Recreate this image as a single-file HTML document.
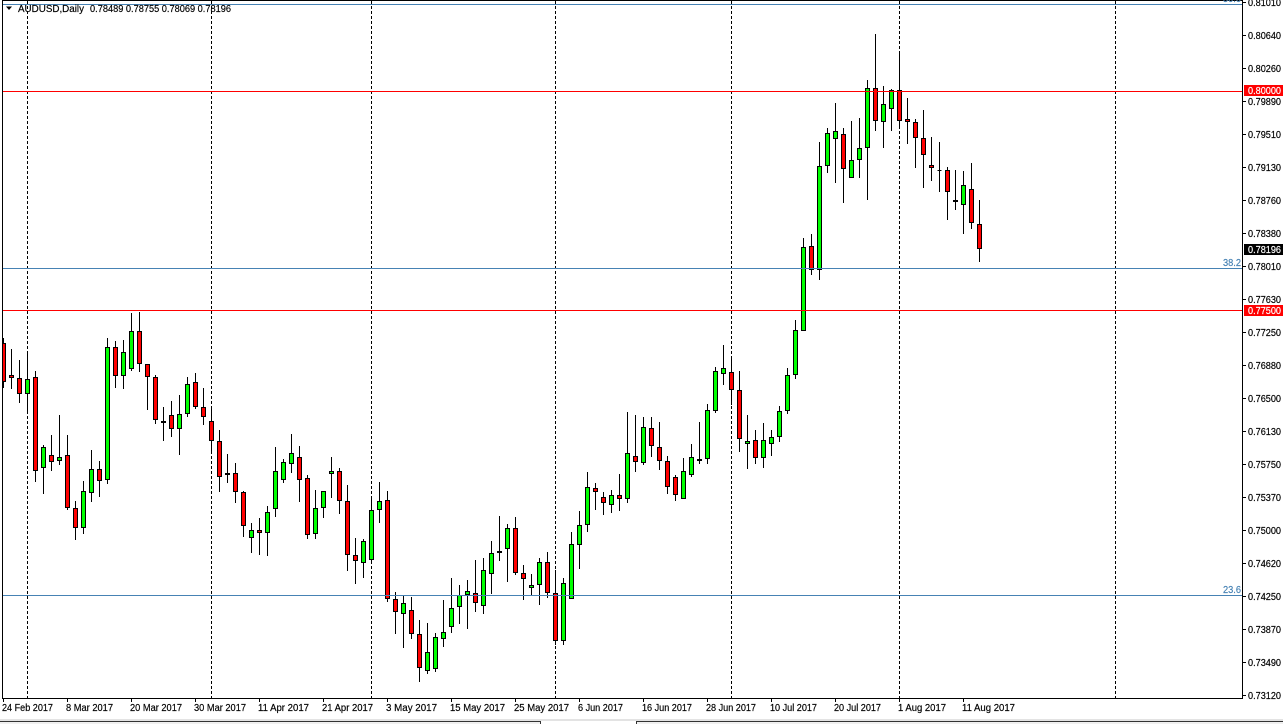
<!DOCTYPE html>
<html><head><meta charset="utf-8"><title>AUDUSD,Daily</title>
<style>
html,body{margin:0;padding:0;background:#fff;width:1283px;height:724px;overflow:hidden}
svg{display:block}
text{font-family:"Liberation Sans",sans-serif;font-size:10px;fill:#000;stroke:#000;stroke-width:.18px}
.c{stroke:#000;stroke-width:1;shape-rendering:crispEdges}
.l{shape-rendering:crispEdges;fill:none}
.f{fill:#4682b4;stroke:#4682b4}
.w{fill:#fff;stroke:#fff}
</style></head><body>
<svg width="1283" height="724" viewBox="0 0 1283 724" xmlns="http://www.w3.org/2000/svg">
<rect width="1283" height="724" fill="#fff"/>
<path class="l" stroke="#000" stroke-dasharray="3 2" d="M27.5 1V698M211.5 1V698M371.5 1V698M555.5 1V698M731.5 1V698M899.5 1V698M1115.5 1V698"/>
<path class="c" fill="none" d="M3.5 338V388M11.5 349V389M19.5 360V403M27.5 354V412M35.5 371V482M43.5 445V494M51.5 435V471M59.5 415V465M67.5 435V510M75.5 501V540M83.5 481V534M91.5 450V502M99.5 461V497M107.5 338V484M115.5 341V388M123.5 340V389M131.5 313V371M139.5 312V372M147.5 364V410M155.5 375V424M163.5 407V441M171.5 401V437M179.5 395V455M187.5 377V417M195.5 373V409M203.5 388V425M211.5 408V453M219.5 430V492M227.5 454V483M235.5 463V503M243.5 491V537M251.5 523V553M259.5 518V555M267.5 506V556M275.5 447V517M283.5 459V483M291.5 434V473M299.5 446V502M307.5 475V539M315.5 490V539M323.5 491V518M331.5 457V498M339.5 468V514M347.5 485V571M355.5 538V584M363.5 539V578M371.5 496V562M379.5 482V523M387.5 491V602M395.5 592V634M403.5 595V648M411.5 597V639M419.5 620V682M427.5 623V674M435.5 633V672M443.5 600V647M451.5 578V633M459.5 585V624M467.5 580V629M475.5 560V612M483.5 558V614M491.5 541V594M499.5 516V561M507.5 524V582M515.5 517V575M523.5 565V600M531.5 574V595M539.5 558V605M547.5 552V598M555.5 570V645M563.5 578V645M571.5 532V599M579.5 511V569M587.5 472V532M595.5 483V510M603.5 492V515M611.5 490V513M619.5 474V511M627.5 412V503M635.5 415V472M643.5 417V465M651.5 417V457M659.5 422V470M667.5 456V494M675.5 475V501M683.5 458V499M691.5 444V477M699.5 422V464M707.5 404V464M715.5 367V413M723.5 345V385M731.5 359V405M739.5 371V452M747.5 415V469M755.5 430V464M763.5 423V468M771.5 430V456M779.5 406V442M787.5 368V414M795.5 320V379M803.5 238V331M811.5 234V275M819.5 142V280M827.5 128V173M835.5 103V183M843.5 128V203M851.5 121V178M859.5 118V178M867.5 80V200M875.5 34V131M883.5 86V148M891.5 89V131M899.5 54V129M907.5 98V144M915.5 119V168M923.5 110V188M931.5 137V181M939.5 142V192M947.5 167V220M955.5 170V210M963.5 171V234M971.5 163V229M979.5 200V262"/>
<path class="c" fill="#ff0000" d="M1.5 343.5h4v38h-4zM9.5 375.5h4v2h-4zM17.5 378.5h4v15h-4zM33.5 377.5h4v93h-4zM49.5 455.5h4v6h-4zM65.5 455.5h4v52h-4zM73.5 508.5h4v19h-4zM97.5 469.5h4v11h-4zM113.5 347.5h4v28h-4zM137.5 331.5h4v32h-4zM145.5 364.5h4v12h-4zM153.5 377.5h4v42h-4zM169.5 415.5h4v13h-4zM193.5 382.5h4v24h-4zM201.5 407.5h4v9h-4zM209.5 421.5h4v19h-4zM217.5 441.5h4v35h-4zM233.5 473.5h4v18h-4zM241.5 492.5h4v33h-4zM257.5 530.5h4v2h-4zM297.5 457.5h4v22h-4zM305.5 478.5h4v56h-4zM337.5 471.5h4v29h-4zM345.5 501.5h4v53h-4zM353.5 555.5h4v5h-4zM385.5 500.5h4v98h-4zM393.5 599.5h4v12h-4zM409.5 610.5h4v23h-4zM417.5 634.5h4v33h-4zM473.5 593.5h4v9h-4zM513.5 528.5h4v44h-4zM521.5 573.5h4v5h-4zM545.5 562.5h4v30h-4zM553.5 593.5h4v47h-4zM593.5 488.5h4v3h-4zM601.5 497.5h4v5h-4zM617.5 495.5h4v3h-4zM633.5 456.5h4v5h-4zM649.5 428.5h4v17h-4zM657.5 447.5h4v13h-4zM665.5 461.5h4v25h-4zM673.5 477.5h4v17h-4zM729.5 372.5h4v17h-4zM737.5 390.5h4v48h-4zM753.5 440.5h4v17h-4zM809.5 246.5h4v23h-4zM841.5 134.5h4v34h-4zM873.5 88.5h4v32h-4zM897.5 90.5h4v30h-4zM905.5 119.5h4v2h-4zM913.5 122.5h4v15h-4zM921.5 138.5h4v16h-4zM929.5 165.5h4v2h-4zM945.5 170.5h4v21h-4zM953.5 200.5h4v1h-4zM969.5 189.5h4v33h-4zM977.5 224.5h4v24h-4z"/>
<path class="c" fill="#00ff00" d="M25.5 379.5h4v14h-4zM41.5 447.5h4v20h-4zM57.5 457.5h4v3h-4zM81.5 491.5h4v36h-4zM89.5 469.5h4v23h-4zM105.5 347.5h4v132h-4zM121.5 352.5h4v23h-4zM129.5 331.5h4v37h-4zM177.5 414.5h4v14h-4zM185.5 384.5h4v29h-4zM225.5 473.5h4v1h-4zM249.5 530.5h4v7h-4zM265.5 512.5h4v20h-4zM273.5 471.5h4v37h-4zM281.5 462.5h4v17h-4zM289.5 453.5h4v10h-4zM313.5 508.5h4v25h-4zM321.5 491.5h4v16h-4zM329.5 471.5h4v2h-4zM361.5 541.5h4v21h-4zM369.5 510.5h4v49h-4zM377.5 501.5h4v8h-4zM401.5 603.5h4v10h-4zM425.5 652.5h4v18h-4zM433.5 637.5h4v31h-4zM441.5 632.5h4v6h-4zM449.5 608.5h4v18h-4zM457.5 595.5h4v11h-4zM465.5 591.5h4v3h-4zM481.5 570.5h4v35h-4zM489.5 553.5h4v20h-4zM505.5 528.5h4v20h-4zM529.5 585.5h4v2h-4zM537.5 562.5h4v22h-4zM561.5 583.5h4v57h-4zM569.5 544.5h4v54h-4zM577.5 525.5h4v19h-4zM585.5 487.5h4v37h-4zM609.5 495.5h4v9h-4zM625.5 453.5h4v45h-4zM641.5 427.5h4v35h-4zM681.5 471.5h4v27h-4zM689.5 457.5h4v17h-4zM697.5 459.5h4v1h-4zM705.5 410.5h4v48h-4zM713.5 371.5h4v39h-4zM721.5 368.5h4v5h-4zM745.5 441.5h4v2h-4zM761.5 440.5h4v17h-4zM769.5 437.5h4v6h-4zM777.5 411.5h4v25h-4zM785.5 375.5h4v35h-4zM793.5 330.5h4v44h-4zM801.5 247.5h4v83h-4zM817.5 166.5h4v103h-4zM825.5 133.5h4v32h-4zM833.5 131.5h4v7h-4zM849.5 160.5h4v17h-4zM857.5 148.5h4v11h-4zM865.5 88.5h4v59h-4zM881.5 104.5h4v17h-4zM889.5 90.5h4v18h-4zM961.5 185.5h4v19h-4z"/>
<path class="c" fill="#000" d="M161.5 421.5h4v1h-4zM497.5 551.5h4v1h-4zM937.5 170.5h4"/>
<rect x="0" y="0" width="2" height="700" fill="#fff"/>
<path class="l" stroke="#4682b4" d="M3 4.5H1242M3 268.5H1242M3 595.5H1242"/>
<path class="l" stroke="#ff0000" d="M3 91.5H1242M3 310.5H1242"/>
<path class="l" stroke="#000" d="M2.5 0V699M2 698.5H1243M1242.5 0V699M2 .5H1243"/>
<path class="l" stroke="#000" d="M1243 2.5h3M1243 35.5h3M1243 68.5h3M1243 101.5h3M1243 134.5h3M1243 167.5h3M1243 200.5h3M1243 233.5h3M1243 266.5h3M1243 299.5h3M1243 332.5h3M1243 365.5h3M1243 398.5h3M1243 431.5h3M1243 464.5h3M1243 497.5h3M1243 530.5h3M1243 563.5h3M1243 596.5h3M1243 629.5h3M1243 662.5h3M1243 695.5h3"/>
<path class="l" stroke="#000" d="M3.5 699v3M67.5 699v3M131.5 699v3M195.5 699v3M259.5 699v3M323.5 699v3M387.5 699v3M451.5 699v3M515.5 699v3M579.5 699v3M643.5 699v3M707.5 699v3M771.5 699v3M835.5 699v3M899.5 699v3M963.5 699v3"/>
<path d="M6 6.5h6l-3 3.5z" fill="#000"/>
<text x="18" y="12" textLength="66" lengthAdjust="spacingAndGlyphs">AUDUSD,Daily</text>
<text x="90" y="12" textLength="141" lengthAdjust="spacingAndGlyphs">0.78489 0.78755 0.78069 0.78196</text>
<text class="f" x="1223" y="2" textLength="18" lengthAdjust="spacingAndGlyphs">50.0</text>
<text class="f" x="1223" y="266" textLength="18" lengthAdjust="spacingAndGlyphs">38.2</text>
<text class="f" x="1223" y="593" textLength="18" lengthAdjust="spacingAndGlyphs">23.6</text>
<g>
<text x="1248" y="6" textLength="33" lengthAdjust="spacingAndGlyphs">0.81010</text>
<text x="1248" y="39" textLength="33" lengthAdjust="spacingAndGlyphs">0.80640</text>
<text x="1248" y="72" textLength="33" lengthAdjust="spacingAndGlyphs">0.80260</text>
<text x="1248" y="105" textLength="33" lengthAdjust="spacingAndGlyphs">0.79890</text>
<text x="1248" y="138" textLength="33" lengthAdjust="spacingAndGlyphs">0.79510</text>
<text x="1248" y="171" textLength="33" lengthAdjust="spacingAndGlyphs">0.79130</text>
<text x="1248" y="204" textLength="33" lengthAdjust="spacingAndGlyphs">0.78760</text>
<text x="1248" y="237" textLength="33" lengthAdjust="spacingAndGlyphs">0.78380</text>
<text x="1248" y="270" textLength="33" lengthAdjust="spacingAndGlyphs">0.78010</text>
<text x="1248" y="303" textLength="33" lengthAdjust="spacingAndGlyphs">0.77630</text>
<text x="1248" y="336" textLength="33" lengthAdjust="spacingAndGlyphs">0.77250</text>
<text x="1248" y="369" textLength="33" lengthAdjust="spacingAndGlyphs">0.76880</text>
<text x="1248" y="402" textLength="33" lengthAdjust="spacingAndGlyphs">0.76500</text>
<text x="1248" y="435" textLength="33" lengthAdjust="spacingAndGlyphs">0.76130</text>
<text x="1248" y="468" textLength="33" lengthAdjust="spacingAndGlyphs">0.75750</text>
<text x="1248" y="501" textLength="33" lengthAdjust="spacingAndGlyphs">0.75370</text>
<text x="1248" y="534" textLength="33" lengthAdjust="spacingAndGlyphs">0.75000</text>
<text x="1248" y="567" textLength="33" lengthAdjust="spacingAndGlyphs">0.74620</text>
<text x="1248" y="600" textLength="33" lengthAdjust="spacingAndGlyphs">0.74250</text>
<text x="1248" y="633" textLength="33" lengthAdjust="spacingAndGlyphs">0.73870</text>
<text x="1248" y="666" textLength="33" lengthAdjust="spacingAndGlyphs">0.73490</text>
<text x="1248" y="699" textLength="33" lengthAdjust="spacingAndGlyphs">0.73120</text>
</g>
<rect x="1244" y="85" width="39" height="11" fill="#ff0000"/>
<text class="w" x="1248" y="94" textLength="33" lengthAdjust="spacingAndGlyphs">0.80000</text>
<rect x="1244" y="244" width="39" height="11" fill="#000"/>
<text class="w" x="1248" y="253" textLength="33" lengthAdjust="spacingAndGlyphs">0.78196</text>
<rect x="1244" y="305" width="39" height="11" fill="#ff0000"/>
<text class="w" x="1248" y="314" textLength="33" lengthAdjust="spacingAndGlyphs">0.77500</text>
<g>
<text x="2" y="711" textLength="51" lengthAdjust="spacingAndGlyphs">24 Feb 2017</text>
<text x="66" y="711" textLength="47" lengthAdjust="spacingAndGlyphs">8 Mar 2017</text>
<text x="130" y="711" textLength="52" lengthAdjust="spacingAndGlyphs">20 Mar 2017</text>
<text x="194" y="711" textLength="52" lengthAdjust="spacingAndGlyphs">30 Mar 2017</text>
<text x="258" y="711" textLength="51" lengthAdjust="spacingAndGlyphs">11 Apr 2017</text>
<text x="322" y="711" textLength="51" lengthAdjust="spacingAndGlyphs">21 Apr 2017</text>
<text x="386" y="711" textLength="51" lengthAdjust="spacingAndGlyphs">3 May 2017</text>
<text x="450" y="711" textLength="55" lengthAdjust="spacingAndGlyphs">15 May 2017</text>
<text x="514" y="711" textLength="55" lengthAdjust="spacingAndGlyphs">25 May 2017</text>
<text x="578" y="711" textLength="45" lengthAdjust="spacingAndGlyphs">6 Jun 2017</text>
<text x="642" y="711" textLength="50" lengthAdjust="spacingAndGlyphs">16 Jun 2017</text>
<text x="706" y="711" textLength="50" lengthAdjust="spacingAndGlyphs">28 Jun 2017</text>
<text x="770" y="711" textLength="47" lengthAdjust="spacingAndGlyphs">10 Jul 2017</text>
<text x="834" y="711" textLength="47" lengthAdjust="spacingAndGlyphs">20 Jul 2017</text>
<text x="898" y="711" textLength="48" lengthAdjust="spacingAndGlyphs">1 Aug 2017</text>
<text x="962" y="711" textLength="53" lengthAdjust="spacingAndGlyphs">11 Aug 2017</text>
</g>
<rect x="0" y="719" width="1283" height="2" fill="#e3e3e3"/>
<rect x="0" y="721" width="1283" height="3" fill="#f0f0f0"/>
<rect x="540" y="721" width="96" height="3" fill="#fff"/>
<path class="l" stroke="#333" d="M0 721.5H540.5V724M636.5 724V721.5H1283"/>
</svg>
</body></html>
